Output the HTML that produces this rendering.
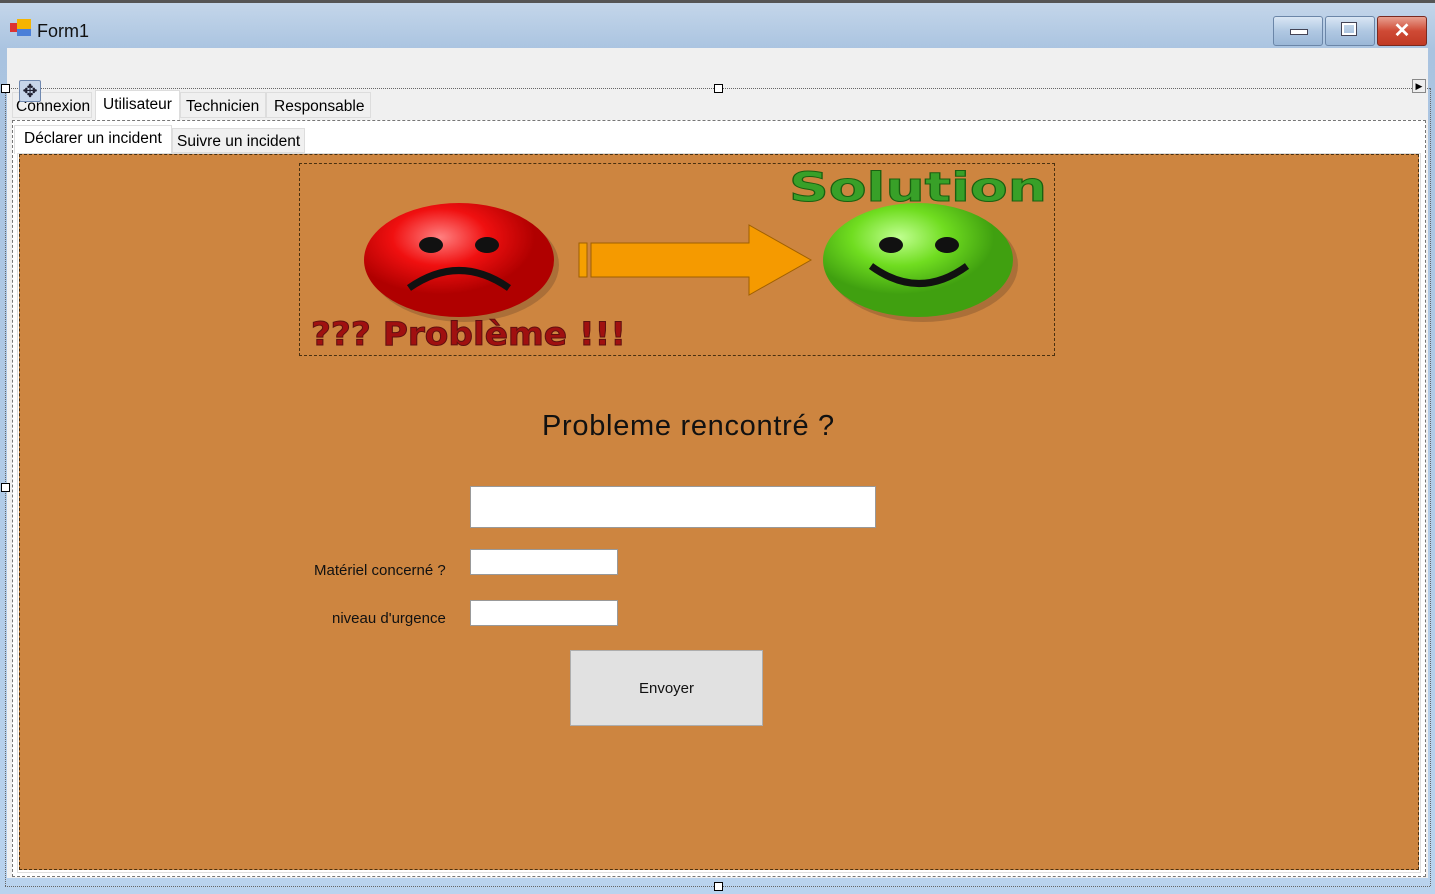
<!DOCTYPE html>
<html><head><style>
body{margin:0;width:1435px;height:894px;overflow:hidden;background:#fff;font-family:"Liberation Sans",sans-serif;position:relative}
.a{position:absolute;white-space:nowrap}
</style></head><body>
<div class="a" style="left:0;top:0;width:1435px;height:894px;background:linear-gradient(#c4d6ea,#a9c3e0 48px,#b9d3ee);border-top:3px solid #555;box-sizing:border-box"></div>
<div class="a" style="left:10px;top:23px;width:9px;height:9px;background:#d33"></div>
<div class="a" style="left:17px;top:19px;width:14px;height:10px;background:#f5b400"></div>
<div class="a" style="left:17px;top:29px;width:14px;height:7px;background:#4a7fd8"></div>
<div class="a" style="left:37px;top:21px;font-size:18px;color:#111">Form1</div>
<div class="a" style="left:1273px;top:16px;width:48px;height:28px;border:1px solid #6b86a8;border-radius:3px;background:linear-gradient(#d9e6f4,#b0c8e2 50%,#9bb7d7)"></div>
<div class="a" style="left:1290px;top:29px;width:16px;height:4px;background:#fff;border:1px solid #445"></div>
<div class="a" style="left:1325px;top:16px;width:48px;height:28px;border:1px solid #6b86a8;border-radius:3px;background:linear-gradient(#d9e6f4,#b0c8e2 50%,#9bb7d7)"></div>
<div class="a" style="left:1342px;top:23px;width:10px;height:8px;border:2px solid #fff;outline:1px solid #445"></div>
<div class="a" style="left:1377px;top:16px;width:48px;height:28px;border:1px solid #7a2a20;border-radius:3px;background:linear-gradient(#e8a090,#cf4a35 50%,#c03a25);color:#fff;font-size:20px;font-weight:bold;text-align:center;line-height:28px">✕</div>
<div class="a" style="left:7px;top:48px;width:1421px;height:830px;background:#f0f0f0"></div>
<div class="a" style="left:5px;top:88px;width:1425px;height:0;border-top:1px dotted #666"></div>
<div class="a" style="left:5px;top:88px;width:0;height:798px;border-left:1px dotted #666"></div>
<div class="a" style="left:1430px;top:88px;width:0;height:798px;border-left:1px dotted #666"></div>
<div class="a" style="left:5px;top:886px;width:1425px;height:0;border-top:1px dotted #666"></div>
<div class="a" style="left:1px;top:84px;width:7px;height:7px;border:1px solid #000;background:#fff"></div>
<div class="a" style="left:714px;top:84px;width:7px;height:7px;border:1px solid #000;background:#fff"></div>
<div class="a" style="left:1px;top:483px;width:7px;height:7px;border:1px solid #000;background:#fff"></div>
<div class="a" style="left:714px;top:882px;width:7px;height:7px;border:1px solid #000;background:#fff"></div>
<div class="a" style="left:1412px;top:79px;width:12px;height:12px;border:1px solid #888;background:#eee;font-size:9px;line-height:12px;text-align:center">▶</div>
<div class="a" style="left:12px;top:92px;width:80px;height:26px;background:#f0f0f0;border:1px solid #ddd;font-size:15.5px;line-height:28px;padding-left:3px;box-sizing:border-box">Connexion</div>
<div class="a" style="left:95px;top:90px;width:85px;height:30px;background:#fff;border:1px solid #ddd;border-bottom:none;font-size:15.5px;line-height:28px;padding-left:7px;box-sizing:border-box">Utilisateur</div>
<div class="a" style="left:180px;top:92px;width:86px;height:26px;background:#f0f0f0;border:1px solid #ddd;font-size:15.5px;line-height:28px;padding-left:5px;box-sizing:border-box">Technicien</div>
<div class="a" style="left:266px;top:92px;width:105px;height:26px;background:#f0f0f0;border:1px solid #ddd;font-size:15.5px;line-height:28px;padding-left:7px;box-sizing:border-box">Responsable</div>
<div class="a" style="left:19px;top:80px;width:20px;height:20px;border:1px solid #7089b0;background:#c8d6ea;border-radius:2px;font-size:18px;line-height:20px;text-align:center;color:#223">✥</div>
<div class="a" style="left:12px;top:120px;width:1414px;height:757px;background:#fff;border:1px dashed #777;box-sizing:border-box"></div>
<div class="a" style="left:14px;top:125px;width:158px;height:29px;background:#fff;border:1px solid #ddd;border-bottom:none;font-size:15.5px;line-height:26px;padding-left:9px;box-sizing:border-box">Déclarer un incident</div>
<div class="a" style="left:172px;top:128px;width:133px;height:25px;background:#f0f0f0;border:1px solid #ddd;font-size:15.5px;line-height:25px;padding-left:4px;box-sizing:border-box">Suivre un incident</div>
<div class="a" style="left:17px;top:153px;width:1404px;height:720px;border:1px solid #ddd;box-sizing:border-box"></div>
<div class="a" style="left:19px;top:154px;width:1400px;height:716px;background:#cd8540;border:1px dashed #4a3010;box-sizing:border-box"></div>
<div class="a" style="left:299px;top:163px;width:756px;height:193px;border:1px dashed #4a3010;box-sizing:border-box"></div>
<svg class="a" style="left:299px;top:163px" width="756" height="193">
<defs><radialGradient id="r" cx="40%" cy="30%"><stop offset="0" stop-color="#ff8080"/><stop offset=".5" stop-color="#f01010"/><stop offset="1" stop-color="#b00000"/></radialGradient>
<radialGradient id="g" cx="40%" cy="30%"><stop offset="0" stop-color="#c0ff90"/><stop offset=".5" stop-color="#70dd20"/><stop offset="1" stop-color="#40a010"/></radialGradient></defs>
<ellipse cx="165" cy="102" rx="95" ry="57" fill="#8a5a30" opacity=".5"/>
<ellipse cx="160" cy="97" rx="95" ry="57" fill="url(#r)"/>
<ellipse cx="132" cy="82" rx="12" ry="8" fill="#111"/><ellipse cx="188" cy="82" rx="12" ry="8" fill="#111"/>
<path d="M110 125 Q160 90 210 125" stroke="#111" stroke-width="7" fill="none"/>
<ellipse cx="624" cy="102" rx="95" ry="57" fill="#8a5a30" opacity=".5"/>
<ellipse cx="619" cy="97" rx="95" ry="57" fill="url(#g)"/>
<ellipse cx="592" cy="82" rx="12" ry="8" fill="#111"/><ellipse cx="648" cy="82" rx="12" ry="8" fill="#111"/>
<path d="M572 103 Q620 138 668 103" stroke="#111" stroke-width="7" fill="none"/>
<rect x="280" y="80" width="8" height="34" fill="#f5a000" stroke="#a06000"/>
<path d="M292 80 H450 V62 L512 97 L450 132 V114 H292 Z" fill="#f59a00" stroke="#a06000"/>
<text x="12" y="182" font-family="DejaVu Sans" font-weight="bold" font-size="32" fill="#a01010" stroke="#601010" textLength="315" lengthAdjust="spacingAndGlyphs">??? Problème !!!</text>
<text x="490" y="38" font-family="DejaVu Sans" font-weight="bold" font-size="40" fill="#38a028" stroke="#1a6010" textLength="258" lengthAdjust="spacingAndGlyphs">Solution</text>
</svg>
<div class="a" style="left:542px;top:410px;font-size:29px;color:#111;letter-spacing:.7px">Probleme rencontré ?</div>
<div class="a" style="left:470px;top:486px;width:406px;height:42px;background:#fff;border:1px solid #999;box-sizing:border-box"></div>
<div class="a" style="left:314px;top:562px;font-size:15px;color:#111">Matériel concerné ?</div>
<div class="a" style="left:470px;top:549px;width:148px;height:26px;background:#fff;border:1px solid #999;box-sizing:border-box"></div>
<div class="a" style="left:332px;top:610px;font-size:15px;color:#111">niveau d'urgence</div>
<div class="a" style="left:470px;top:600px;width:148px;height:26px;background:#fff;border:1px solid #999;box-sizing:border-box"></div>
<div class="a" style="left:570px;top:650px;width:193px;height:76px;background:#e1e1e1;border:1px solid #adadad;box-sizing:border-box;font-size:15px;text-align:center;line-height:76px;color:#111">Envoyer</div>
</body></html>
